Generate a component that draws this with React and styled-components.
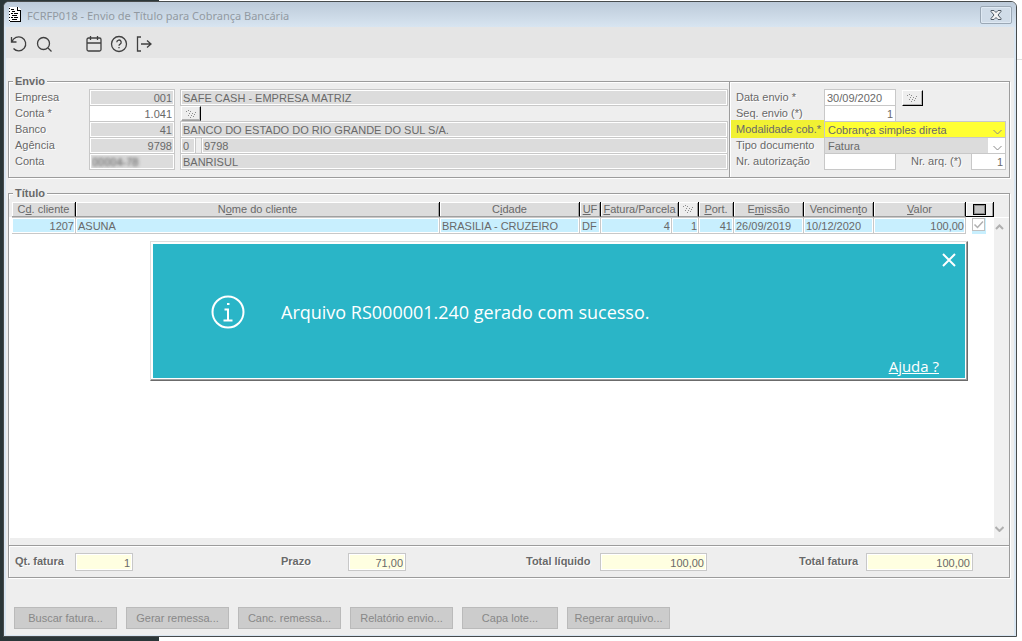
import React from "react";
import styled, { createGlobalStyle, css } from "styled-components";

const Global = createGlobalStyle`
  * { box-sizing: border-box; }
  html, body { margin: 0; }
  body {
    font: 11px/14px "Liberation Sans", Arial, sans-serif;
    color: #696969;
    background:
      linear-gradient(#dddddd, #dddddd) right 59px / 5px 1px no-repeat,
      linear-gradient(to right, #2b3638 159px, #ffffff 159px);
  }
  input, select, button { font: inherit; color: inherit; margin: 0; border-radius: 0; }
`;

const Page = styled.div`
  min-height: 100vh;
  display: flex;
  padding: 1px 5px 4px 3px;
`;

const Window = styled.main`
  flex: 1;
  min-width: 0;
  display: flex;
  flex-direction: column;
  border: 1px solid #474b4c;
  border-radius: 6px 6px 0 0;
  background: #d9e6f2;
  padding: 0 2px 1px;
  overflow: hidden;
`;

const TitleBar = styled.header`
  height: 25px;
  flex: none;
  display: flex;
  align-items: center;
  gap: 5px;
  padding: 0 4px;
  margin: 0 -2px;
  background: linear-gradient(#bccad9, #d8e5f1);
  h1 {
    flex: 1;
    margin: 0;
    padding-top: 2px;
    font: 400 11px/16px "Noto Sans", "Open Sans", sans-serif;
    color: #929aa2;
  }
`;

const CloseWindow = styled.button`
  width: 32px;
  height: 18px;
  padding: 0;
  display: grid;
  place-items: center;
  border: 1px solid #9ba8b5;
  border-radius: 2px;
  background: #d0dce8;
  box-shadow: inset 0 0 0 1px #dfe9f3;
`;

const Toolbar = styled.nav`
  height: 31px;
  flex: none;
  display: flex;
  align-items: center;
  padding: 3px 0 0 4px;
  gap: 7px;
  background: #e5e5e5;
`;

const ToolButton = styled.button`
  width: 18px;
  height: 18px;
  padding: 0;
  border: 0;
  background: none;
  margin-left: ${(p) => (p.$apart ? "25px" : "0")};
  svg {
    display: block;
    fill: none;
    stroke: #404040;
    stroke-width: 1.3;
  }
`;

const Body = styled.div`
  flex: 1;
  display: flex;
  flex-direction: column;
  padding: 17px 4px 6px 2px;
  background: #eeeeee;
`;

const Group = styled.fieldset`
  display: flex;
  flex-direction: ${(p) => (p.$column ? "column" : "row")};
  flex: ${(p) => (p.$grow ? "1 0 auto" : "none")};
  min-width: 0;
  margin: 0 0 ${(p) => p.$below}px;
  padding: 0;
  border: 1px solid #9c9c9c;
  box-shadow: 1px 1px 0 #ffffff, inset 1px 1px 0 #ffffff;
`;

const Legend = styled.legend`
  margin-left: 4px;
  padding: 0 2px;
  font-weight: 700;
  line-height: 12px;
  background: #eeeeee;
`;

const Rows = styled.div`
  flex: 1;
  min-width: 0;
  padding: 2px 1px 8px 6px;
`;

const SideRows = styled.div`
  flex: none;
  width: 280px;
  margin-top: -5px;
  padding: 7px 3px 7px 6px;
  border-left: 1px solid #9c9c9c;
  box-shadow: inset 1px 0 0 #ffffff;
`;

const Row = styled.div`
  display: flex;
  height: 16px;
`;

const Label = styled.label`
  flex: none;
  width: ${(p) => p.$width}px;
  line-height: 16px;
  text-shadow: 1px 1px 0 #ffffff;
  ${(p) => p.$mark && css`
    height: 18px;
    margin: -1px 0 0 -5px;
    width: ${p.$width + 5}px;
    padding-left: 5px;
    line-height: 18px;
    text-shadow: none;
    background: #f1f133;
  `}
`;

const tones = { off: "#dcdcdc", on: "#ffffff", total: "#ffffe1" };

const Field = styled.input`
  flex: ${(p) => (p.$width ? "none" : "1")};
  width: ${(p) => (p.$width ? p.$width + "px" : "auto")};
  min-width: 0;
  height: ${(p) => (p.$tall ? 18 : 17)}px;
  margin-right: ${(p) => p.$gap || 0}px;
  padding: 1px 2px 0;
  border: 1px solid #c8c8c8;
  outline: 0;
  background: ${(p) => tones[p.$tone || "off"]};
  box-shadow: inset 0 0 0 1px #ffffff;
  text-align: ${(p) => (p.$right ? "right" : "left")};
  ${(p) => p.$masked && css`
    color: transparent;
    text-shadow: 0 0 3px #777777, 0 0 4px #999999;
  `}
`;

const Lookup = styled.button`
  width: ${(p) => (p.$raised ? 21 : 20)}px;
  height: ${(p) => (p.$raised ? 16 : 15)}px;
  margin: 1px 0 0;
  padding: 0;
  display: grid;
  place-items: center;
  border: 1px solid #ffffff;
  border-right: 1px solid #000000;
  border-bottom: 1px solid ${(p) => (p.$raised ? "#000000" : "#a0a0a0")};
  background: #eeeeee;
  box-shadow: inset -1px -1px 0 #b4b4b4;
`;

const Combo = styled.div`
  position: relative;
  flex: 1;
  height: 17px;
  border: 1px solid #c8c8c8;
  background: ${(p) => (p.$mark ? "#ffff33" : "#ffffff")};
  select {
    display: block;
    width: ${(p) => (p.$mark ? "100%" : "calc(100% - 17px)")};
    height: 15px;
    padding: 0 3px;
    border: 0;
    outline: 0;
    appearance: none;
    background: ${(p) => (p.$mark ? "transparent" : "#dcdcdc")};
  }
  svg {
    position: absolute;
    right: 3px;
    top: 7px;
    pointer-events: none;
  }
`;

const Listing = styled.div`
  position: relative;
  flex: 1;
  display: flex;
  min-height: 338px;
  margin-bottom: 7px;
  background: linear-gradient(#eeeeee 18px, #ffffff 18px);
`;

const TableArea = styled.div`
  flex: 1;
  min-width: 0;
  padding: 3px 0 0 3px;
`;

const Table = styled.table`
  width: 100%;
  table-layout: fixed;
  border-collapse: separate;
  border-spacing: 0;
`;

const Head = styled.th`
  height: 15px;
  padding: 0;
  font-weight: 400;
  white-space: nowrap;
  background: ${(p) => (p.$light ? "#eeeeee" : "#dcdcdc")};
  border-right: 1px solid #000000;
  border-bottom: 1px solid ${(p) => (p.$button ? "#000000" : "#a0a0a0")};
  box-shadow: inset 1px 1px 0 #ffffff, inset -1px 0 0 #a0a0a0;
  line-height: 14px;
  svg, i { display: block; margin: 0 auto; }
  i {
    width: 13px;
    height: 11px;
    border: 1px solid #000000;
    outline: 1px solid #8a8a8a;
    outline-offset: -2px;
    background: #c4c4c4;
  }
`;

const Cell = styled.td`
  height: 17px;
  padding: 0 1px 0 2px;
  line-height: 14px;
  white-space: nowrap;
  text-align: ${(p) => (p.$right ? "right" : "left")};
  background: #c8effe;
  border-right: 1px solid #c8c8c8;
  border-bottom: 1px solid #c8c8c8;
  border-top: 1px solid #c8c8c8;
  box-shadow: inset 0 0 0 1px #ffffff;
`;

const CheckCell = styled.td`
  padding: 0 0 0 6px;
  label {
    display: grid;
    width: 14px;
    height: 16px;
    background: #c8effe;
  }
  input {
    appearance: none;
    width: 13px;
    height: 13px;
    border: 1px solid #c0c0c0;
    background: #ffffff;
  }
  input, svg { grid-area: 1 / 1; }
  svg { margin: 1px; }
`;

const ScrollTrack = styled.div`
  width: 15px;
  margin-top: 19px;
  padding: 6px 4px 6px 0;
  display: flex;
  flex-direction: column;
  align-items: center;
  justify-content: space-between;
  background: #f0f0f0;
`;

const Toast = styled.section`
  position: absolute;
  left: 141px;
  right: 41px;
  top: 42px;
  height: 140px;
  display: flex;
  flex-direction: column;
  justify-content: space-between;
  padding: 10px 10px 3px 59px;
  color: #ffffff;
  background: #2ab5c7;
  border: 1px solid #dedede;
  border-right-color: #6b6b6b;
  border-bottom-color: #6b6b6b;
  box-shadow: inset -1px -1px 0 #a0a0a0, inset 0 0 0 2px #ffffff;
  font-family: "Open Sans", "Noto Sans", sans-serif;
  button {
    align-self: flex-end;
    width: 16px;
    height: 16px;
    padding: 0;
    border: 0;
    background: none;
  }
  svg { display: block; fill: none; stroke: #ffffff; stroke-width: 2; }
  p {
    display: flex;
    align-items: center;
    gap: 35px;
    margin: 0;
    font-size: 18px;
    line-height: 36px;
  }
  a {
    align-self: flex-end;
    margin-right: 18px;
    font-size: 15px;
    line-height: 22px;
    color: #ffffff;
  }
`;

const Totals = styled.div`
  display: grid;
  grid-template-columns: 266fr 245fr 273fr 210fr;
  height: 32px;
  padding: 7px 0 0 6px;
  border-top: 1px solid #9c9c9c;
  box-shadow: inset 0 1px 0 #ffffff;
  label { font-weight: 700; }
`;

const Total = styled.div`
  display: flex;
`;

const Actions = styled.footer`
  display: flex;
  flex-wrap: wrap;
  gap: 9px;
  padding-left: 6px;
`;

const Action = styled.button`
  min-width: ${(p) => (p.$narrow ? 96 : 103)}px;
  height: 22px;
  padding: 0 4px;
  color: #888888;
  background: #cccccc;
  border: 1px solid #bababa;
`;

const Hatch = () => (
  <svg width="11" height="8" viewBox="0 0 11 8" fill="#8c8c8c" shapeRendering="crispEdges">
    <path d="M0 1h1v1H0zM2 0h1v1H2zM4 1h1v1H4zM3 3h1v1H3zM2 5h1v1H2zM6 3h1v1H6zM5 5h1v1H5zM4 7h1v1H4zM9 2h1v1H9zM8 4h1v1H8zM7 6h1v1H7z" />
  </svg>
);

const Chevron = ({ up, bold }) => (
  <svg width="9" height="6" viewBox="0 0 9 6" fill="none" stroke={bold ? "#b0b0b0" : "#8a8a8a"} strokeWidth={bold ? 2 : 1}>
    <path d={up ? "M1 5 4.500 1.500 8 5" : "M.5 1 4.500 5 8.500 1"} />
  </svg>
);

const tools = [
  ["Limpar", <path d="M1.500 2v5h5M2 6.800A7 7 0 1 1 3.500 13.500" />],
  ["Consultar", <><circle cx="8.500" cy="8.500" r="6" /><path d="m13 13 3.500 3.500" /></>],
  ["Calendário", <><rect x="2" y="3" width="14" height="13" rx="1.500" /><path d="M2 8h14M5.500 1v4M12.500 1v4" /></>],
  ["Ajuda", <><circle cx="9" cy="9" r="7.500" /><path d="M6.800 7.200a2.200 2.200 0 1 1 3.300 1.900c-.8.400-1.100.7-1.100 1.600M9 12v1.300" /></>],
  ["Sair", <path d="M6 2H2.500v14H6M6 9h10M12 5.500 16 9l-4 3.500" />],
];

const headings = [
  [<>C<u>d</u>. cliente</>],
  [<>N<u>o</u>me do cliente</>],
  [<>C<u>i</u>dade</>],
  [<><u>U</u>F</>],
  [<><u>F</u>atura/Parcela</>, 2],
  [<Hatch />, 1, true],
  [<><u>P</u>ort.</>],
  [<>E<u>m</u>issão</>],
  [<>Vencimen<u>t</u>o</>],
  [<><u>V</u>alor</>],
  [<i />, 1, true, true],
];

const widths = [64, null, 140, 21, 71, 7, 20, 35, 70, 70, 92, 28];

const cells = [
  ["1207", true], ["ASUNA"], ["BRASILIA - CRUZEIRO"], ["DF"], ["4", true],
  ["1", true, 2], ["41", true], ["26/09/2019"], ["10/12/2020"], ["100,00", true],
];

const totals = [
  ["qt", "Qt. fatura", 60, "1", 58],
  ["prazo", "Prazo", 67, "71,00", 58],
  ["liquido", "Total líquido", 74, "100,00", 107],
  ["fatura", "Total fatura", 67, "100,00", 107],
];

const actions = ["Buscar fatura...", "Gerar remessa...", "Canc. remessa...", "Relatório envio...", "Capa lote...", "Regerar arquivo..."];

export default function App() {
  return (
    <>
      <Global />
      <Page>
        <Window>
          <TitleBar>
            <svg width="14" height="17" viewBox="0 0 14 17" shapeRendering="crispEdges">
              <path d="M1 1h9l3 3v12H1z" fill="#ffffff" />
              <path d="M12 4h1v12H2v-1h10zM9 1h1v3h3v1H9zM1 2h1v1H1zM1 5h1v1H1zM1 8h1v1H1zM1 11h1v1H1zM1 14h1v1H1z" fill="#000000" />
              <path d="M3 3h3v1H3zM4 5h3v1H4zM3 7h2v1H3zM6 7h4v1H6zM4 9h5v1H4zM3 11h2v1H3zM6 11h4v1H6zM4 13h5v1H4z" fill="#000000" />
            </svg>
            <h1>FCRFP018 - Envio de Título para Cobrança Bancária</h1>
            <CloseWindow aria-label="Fechar janela">
              <svg width="12" height="10" viewBox="0 0 12 10">
                <path d="M1 .5h3l2 2 2-2h3v1L8 5l3 3.500v1H8l-2-2-2 2H1v-1L4 5 1 1.500z" fill="#f4f4f4" stroke="#4e5965" />
              </svg>
            </CloseWindow>
          </TitleBar>
          <Toolbar>
            {tools.map(([name, icon]) => (
              <ToolButton key={name} aria-label={name} $apart={name === "Calendário"}>
                <svg width="18" height="18" viewBox="0 0 18 18">{icon}</svg>
              </ToolButton>
            ))}
          </Toolbar>
          <Body>
            <Group $below={9}>
              <Legend>Envio</Legend>
              <Rows>
                <Row>
                  <Label $width={74} htmlFor="empresa">Empresa</Label>
                  <Field id="empresa" $width={86} $gap={5} $right readOnly value="001" />
                  <Field aria-label="Nome da empresa" readOnly value="SAFE CASH - EMPRESA MATRIZ" />
                </Row>
                <Row>
                  <Label $width={74} htmlFor="conta">Conta *</Label>
                  <Field id="conta" $width={86} $gap={6} $tone="on" $right defaultValue="1.041" />
                  <Lookup aria-label="Pesquisar conta"><Hatch /></Lookup>
                </Row>
                <Row>
                  <Label $width={74} htmlFor="banco">Banco</Label>
                  <Field id="banco" $width={86} $gap={5} $right readOnly value="41" />
                  <Field aria-label="Nome do banco" readOnly value="BANCO DO ESTADO DO RIO GRANDE DO SUL S/A." />
                </Row>
                <Row>
                  <Label $width={74} htmlFor="agencia">Agência</Label>
                  <Field id="agencia" $width={86} $gap={5} $right readOnly value="9798" />
                  <Field aria-label="Dígito da agência" $width={16} $gap={5} readOnly value="0" />
                  <Field aria-label="Nome da agência" readOnly value="9798" />
                </Row>
                <Row>
                  <Label $width={74} htmlFor="numero">Conta</Label>
                  <Field id="numero" $width={86} $gap={5} $masked readOnly value="00004-78" />
                  <Field aria-label="Nome da conta" readOnly value="BANRISUL" />
                </Row>
              </Rows>
              <SideRows>
                <Row>
                  <Label $width={88} htmlFor="data">Data envio *</Label>
                  <Field id="data" $width={72} $gap={6} $tone="on" defaultValue="30/09/2020" />
                  <Lookup $raised aria-label="Escolher data"><Hatch /></Lookup>
                </Row>
                <Row>
                  <Label $width={88} htmlFor="seq">Seq. envio (*)</Label>
                  <Field id="seq" $width={72} $tone="on" $right defaultValue="1" />
                </Row>
                <Row>
                  <Label $width={88} $mark htmlFor="modalidade">Modalidade cob.*</Label>
                  <Combo $mark>
                    <select id="modalidade"><option>Cobrança simples direta</option></select>
                    <Chevron />
                  </Combo>
                </Row>
                <Row>
                  <Label $width={88} htmlFor="tipo">Tipo documento</Label>
                  <Combo>
                    <select id="tipo"><option>Fatura</option></select>
                    <Chevron />
                  </Combo>
                </Row>
                <Row>
                  <Label $width={88} htmlFor="autorizacao">Nr. autorização</Label>
                  <Field id="autorizacao" $width={72} $gap={15} $tone="on" />
                  <Label $width={60} htmlFor="arq">Nr. arq. (*)</Label>
                  <Field id="arq" $tone="on" $right defaultValue="1" />
                </Row>
              </SideRows>
            </Group>
            <Group $column $grow $below={29}>
              <Legend>Título</Legend>
              <Listing>
                <TableArea>
                  <Table>
                    <colgroup>
                      {widths.map((w, i) => <col key={i} width={w ?? undefined} />)}
                    </colgroup>
                    <thead>
                      <tr>
                        {headings.map(([text, span = 1, light, button], i) => (
                          <Head key={i} colSpan={span} $light={light} $button={button}>{text}</Head>
                        ))}
                      </tr>
                    </thead>
                    <tbody>
                      <tr>
                        {cells.map(([text, right, span = 1], i) => (
                          <Cell key={i} colSpan={span} $right={right}>{text}</Cell>
                        ))}
                        <CheckCell>
                          <label>
                            <input type="checkbox" defaultChecked aria-label="Selecionar título" />
                            <svg width="11" height="11" viewBox="0 0 11 11" fill="none" stroke="#b0b0b0" strokeWidth="1.500">
                              <path d="m1.500 5.500 3 3 5.500-6" />
                            </svg>
                          </label>
                        </CheckCell>
                      </tr>
                    </tbody>
                  </Table>
                </TableArea>
                <ScrollTrack>
                  <Chevron up bold />
                  <Chevron bold />
                </ScrollTrack>
                <Toast role="status">
                  <button aria-label="Fechar aviso">
                    <svg width="16" height="16" viewBox="0 0 16 16"><path d="m2 2 12 12M14 2 2 14" /></svg>
                  </button>
                  <p>
                    <svg width="36" height="36" viewBox="0 0 36 36">
                      <circle cx="18" cy="18" r="15.500" />
                      <path d="M14.500 15.500H18V26M13.500 26.500h9M17 10h2.500" />
                    </svg>
                    Arquivo RS000001.240 gerado com sucesso.
                  </p>
                  <a href="#ajuda">Ajuda ?</a>
                </Toast>
              </Listing>
              <Totals>
                {totals.map(([id, text, labelWidth, value, width]) => (
                  <Total key={id}>
                    <Label $width={labelWidth} htmlFor={id}>{text}</Label>
                    <Field id={id} $width={width} $tall $tone="total" $right readOnly value={value} />
                  </Total>
                ))}
              </Totals>
            </Group>
            <Actions>
              {actions.map((text) => (
                <Action key={text} $narrow={text.startsWith("Capa")}>{text}</Action>
              ))}
            </Actions>
          </Body>
        </Window>
      </Page>
    </>
  );
}
